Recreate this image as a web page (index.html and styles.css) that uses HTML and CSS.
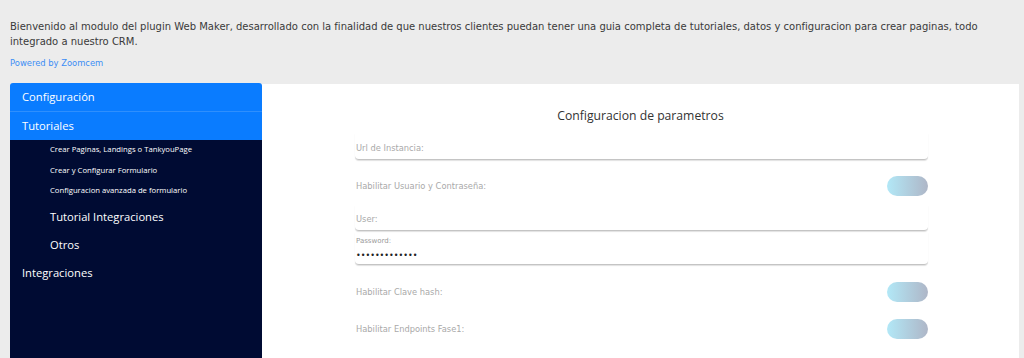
FILE: index.html
```html
<!DOCTYPE html>
<html lang="es">
<head>
<meta charset="utf-8">
<title>Web Maker</title>
<link rel="stylesheet" href="styles.css">
</head>
<body>
<div class="intro">
  <p class="lead">Bienvenido al modulo del plugin Web Maker, desarrollado con la finalidad de que nuestros clientes puedan tener una guia completa de tutoriales, datos y configuracion para crear paginas, todo integrado a nuestro CRM.</p>
  <a class="powered" href="#">Powered by Zoomcem</a>
</div>
<div class="layout">
  <nav class="sidebar">
    <div class="nav-head">Configuración</div>
    <div class="nav-head">Tutoriales</div>
    <div class="nav-dark">
      <div class="sub small">Crear Paginas, Landings o TankyouPage</div>
      <div class="sub small">Crear y Configurar Formulario</div>
      <div class="sub small">Configuracion avanzada de formulario</div>
      <div class="sub big">Tutorial Integraciones</div>
      <div class="sub big">Otros</div>
      <div class="top">Integraciones</div>
    </div>
  </nav>
  <main class="panel">
    <h2 class="title">Configuracion de parametros</h2>
    <form class="form">
      <div class="field line url"><span class="label">Url de Instancia:</span></div>
      <div class="field toggle-row t1"><span class="label">Habilitar Usuario y Contraseña:</span><span class="toggle"></span></div>
      <div class="field line user"><span class="label">User:</span></div>
      <div class="field line pass"><span class="label tiny">Password:</span><span class="dots">•••••••••••••</span></div>
      <div class="field toggle-row hash"><span class="label">Habilitar Clave hash:</span><span class="toggle"></span></div>
      <div class="field toggle-row ep"><span class="label">Habilitar Endpoints Fase1:</span><span class="toggle"></span></div>
    </form>
  </main>
</div>
</body>
</html>
```
FILE: styles.css
```css
html, body {
  margin: 0;
  padding: 0;
  background: #ececec;
  height: 358px;
  overflow: hidden;
}
.intro {
  padding: 19px 10px 0 10px;
  font-family: "DejaVu Sans", Verdana, sans-serif;
}
.lead {
  margin: 0;
  font-size: 10px;
  line-height: 15px;
  color: #3a3a3a;
}
.powered {
  display: block;
  margin-top: 8px;
  font-size: 8.4px;
  color: #3b8cf5;
  text-decoration: none;
  line-height: 12px;
}
.layout {
  display: flex;
  margin-top: 14px;
  padding-left: 10px;
  padding-right: 5px;
  height: 280px;
}
.sidebar {
  width: 252px;
  flex: none;
  display: flex;
  flex-direction: column;
  font-family: "Open Sans", sans-serif;
  border-radius: 3px 3px 0 0;
  overflow: hidden;
}
.nav-head {
  background: #0a7cff;
  color: #fff;
  font-size: 11.2px;
  height: 28px;
  line-height: 28px;
  padding-left: 12px;
  border-bottom: 1px solid #2f8ffd;
}
.nav-head + .nav-head {
  border-bottom: none;
}
.nav-dark {
  flex: 1;
  background: #000b33;
  color: #fff;
}
.sub {
  padding-left: 40px;
}
.sub.small {
  font-size: 7.7px;
  height: 20.5px;
  line-height: 18px;
}
.sub.big {
  font-size: 11.2px;
  height: 28px;
  line-height: 28px;
}
.sub.small + .sub.big {
  margin-top: 1px;
}
.top {
  padding-left: 12px;
  font-size: 11.2px;
  height: 28px;
  line-height: 28px;
}
.panel {
  flex: 1;
  background: #fff;
  margin-top: 1px;
  display: flex;
  flex-direction: column;
  align-items: center;
}
.title {
  margin: 23px 0 0 0;
  font-family: "Open Sans", sans-serif;
  font-weight: normal;
  font-size: 12.2px;
  color: #333;
  line-height: 18px;
}
.form {
  width: 573px;
  margin: 8px 0 0 2px;
  font-family: "DejaVu Sans", Verdana, sans-serif;
  display: flex;
  flex-direction: column;
}
.field {
  display: flex;
  align-items: center;
  justify-content: space-between;
  box-sizing: border-box;
}
.label {
  font-size: 8.3px;
  color: #a9a9a9;
  padding-left: 1px;
  line-height: 10px;
}
.line {
  border-bottom: 1px solid #c4c4c4;
  border-radius: 0 0 4px 4px;
  box-shadow: 0 1px 1px rgba(0, 0, 0, 0.12);
  align-items: flex-end;
  padding-bottom: 6px;
}
.url {
  height: 27px;
}
.t1 {
  height: 38px;
  margin-top: 7px;
}
.user {
  height: 26px;
}
.pass {
  height: 33px;
  flex-direction: column;
  align-items: flex-start;
  justify-content: flex-end;
  margin-top: 1px;
  padding-bottom: 1px;
}
.label.tiny {
  font-size: 7px;
  color: #999;
  margin-bottom: 3px;
}
.dots {
  font-size: 8px;
  color: #222;
  line-height: 14px;
  padding-left: 1px;
}
.hash {
  height: 40px;
  margin-top: 7px;
}
.ep {
  height: 34px;
}
.toggle {
  width: 41px;
  height: 20px;
  border-radius: 10px;
  background: linear-gradient(to right, #b2e8f7, #aeb6c7);
}
```
